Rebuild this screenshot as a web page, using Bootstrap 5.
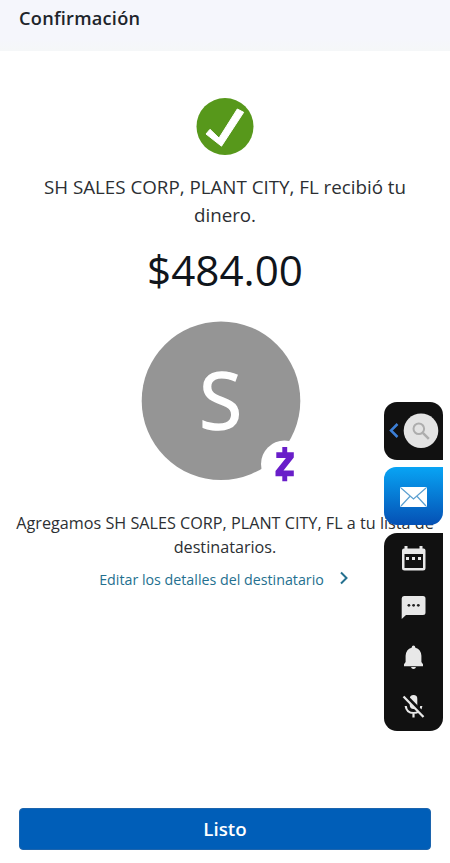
<!DOCTYPE html>
<html lang="es">
<head>
<meta charset="utf-8">
<meta name="viewport" content="width=device-width, initial-scale=1">
<title>Confirmación</title>
<link href="https://cdn.jsdelivr.net/npm/bootstrap@5.3.0/dist/css/bootstrap.min.css" rel="stylesheet">
<style>
  body { font-family: "Open Sans", "Noto Sans", sans-serif; color: #2c2f33; }
  .screen { width: 450px; height: 863px; }
  .top-bar { height: 51px; background: linear-gradient(#f5f6fc 75%, #f5f7f8); padding: 6px 19px; }
  .top-bar h1 { font-size: 18.2px; letter-spacing: .25px; line-height: 25px; font-weight: 600; color: #20242b; }
  .check { margin-top: 46px; height: 60px; }
  .received { margin-top: 16px; font-size: 18.75px; line-height: 28px; }
  .amount { margin-top: 12px; font-size: 42.2px; line-height: 57px; color: #10151b; }
  .avatar { width: 180px; height: 180px; margin: 12px 0 0 130px; }
  .avatar text { font-size: 78px; }
  .added { margin-top: 22px; font-size: 16.2px; line-height: 23.5px; }
  .edit-link { margin: 11px 3px 0 0; font-size: 14.25px; line-height: 20px; color: #24708f; gap: 16px; }
  .edit-link svg { margin-top: -4px; }
  .done { margin: 0 19px 13px; height: 42px; border-radius: 4px; background: #005eb8; border: 1px solid #1c64ad; font-size: 18.7px; font-weight: 600; }
  .edge-tools { left: 384px; top: 402px; width: 59px; gap: 7px; }
  .tool { height: 58px; background: #111; }
  .tool-search { border-radius: 13px 13px 0 13px; }
  .tool-mail { border-radius: 12px 0 13px 13px; background: linear-gradient(#08a4f4, #0550b4); }
  .tool-list { height: 198px; border-radius: 13px 0 13px 13px; margin-top: 1px; }
</style>
</head>
<body class="bg-white">
<div class="screen position-relative d-flex flex-column overflow-hidden">
  <header class="top-bar"><h1 class="m-0">Confirmación</h1></header>

  <main class="flex-grow-1 text-center">
    <svg class="check d-block mx-auto" width="60" height="60" viewBox="0 0 60 60" aria-hidden="true">
      <circle cx="30" cy="29.5" r="28.5" fill="#57981b"/>
      <path d="M11 37 26.500 49.200 48.700 15.300 42.300 12 24 41 15 32.300z" fill="#fff" stroke="#fff" stroke-width="1" stroke-linejoin="round"/>
    </svg>
    <p class="received mb-0">SH SALES CORP, PLANT CITY, FL recibió tu<br>dinero.</p>
    <p class="amount mb-0">$484.00</p>
    <svg class="avatar d-block" viewBox="130 310 180 180" aria-label="S">
      <circle cx="221" cy="400.7" r="79.3" fill="#959595"/>
      <text x="220.700" y="429" fill="#fff" stroke="#fff" stroke-width="1.500" text-anchor="middle">S</text>
      <circle cx="284.5" cy="464" r="23.5" fill="#fff"/>
      <path d="M282.3 447h4.9v5.200h6.600v5.400l-10.300 13h10.300v5.700h-6.600v5h-4.900v-5h-6.800v-5.300l10.400-13.100h-9.600v-5.700h6z" fill="#691ec9"/>
    </svg>
    <p class="added mb-0">Agregamos SH SALES CORP, PLANT CITY, FL a tu lista de<br>destinatarios.</p>
    <a href="#" class="edit-link d-flex justify-content-center align-items-center text-decoration-none">
      <span>Editar los detalles del destinatario</span>
      <svg width="8" height="14" viewBox="0 0 8 14"><path d="M1 1.500 6.500 7 1 12.500" fill="none" stroke="#24708f" stroke-width="2"/></svg>
    </a>
  </main>

  <button type="button" class="done btn btn-primary p-0">Listo</button>

  <aside class="edge-tools position-absolute d-flex flex-column">
    <div class="tool tool-search">
      <svg width="59" height="58" viewBox="0 0 59 58">
        <path d="M13.5 22 7 28.5l6.5 6.5" fill="none" stroke="#3c7fd6" stroke-width="2.5"/>
        <circle cx="37" cy="28.7" r="17.3" fill="#e3e3e3"/>
        <circle cx="34.8" cy="26.8" r="5.3" fill="none" stroke="#adadad" stroke-width="2"/>
        <path d="m38.8 30.8 6 6" stroke="#adadad" stroke-width="2.5"/>
      </svg>
    </div>
    <div class="tool tool-mail">
      <svg width="59" height="58" viewBox="0 0 59 58">
        <rect x="16" y="20" width="27" height="20" rx="1.5" fill="#fff"/>
        <path d="m17 21 12.5 11L42 21M17 39l8.8-9.5M42 39l-8.8-9.5" fill="none" stroke="#5a9fd0" stroke-width="1.2"/>
      </svg>
    </div>
    <div class="tool tool-list">
      <svg width="59" height="198" viewBox="384 533 59 198" fill="#e8e8e8">
        <path fill-rule="evenodd" d="M404.500 546h3v2.500h12V546h3v2.500h1q2 0 2 2V568q0 2.500-2.500 2.500h-18.500q-2.500 0-2.500-2.500v-17.500q0-2 2-2h.5zM404.500 554v14h18.500v-14z"/>
        <path d="M406 557h3v3h-3zm6 0h3v3h-3zm6 0h3v3h-3z"/>
        <path d="M404 596h19q2.500 0 2.500 2.500v14q0 2.500-2.500 2.500h-17l-4.300 4v-20.500q0-2.500 2.300-2.500z"/>
        <g fill="#222"><circle cx="408.900" cy="605.300" r="1.400"/><circle cx="413.600" cy="605.300" r="1.400"/><circle cx="418.300" cy="605.300" r="1.400"/></g>
        <path d="M413.500 645.500q1.600 0 1.900 2.200 5.600 1.600 6 8v6.300l1.600 2.300v1.900h-19v-1.900l1.600-2.300v-6.300q.4-6.400 6-8 .3-2.200 1.900-2.200zM411 667h5q-.5 2-2.500 2t-2.500-2z"/>
        <rect x="409.800" y="695" width="7.500" height="14" rx="3.700"/>
        <path d="M405.700 706q.8 7 7.800 7t7.800-7M413.500 712v5.500" fill="none" stroke="#e8e8e8" stroke-width="2.200"/>
        <path d="m404 694.500 21 21.500" stroke="#111" stroke-width="4"/>
        <path d="m403.500 696.500 20 20.500" stroke="#e8e8e8" stroke-width="2.300"/>
      </svg>
    </div>
  </aside>
</div>
<script src="https://cdn.jsdelivr.net/npm/bootstrap@5.3.0/dist/js/bootstrap.bundle.min.js"></script>
</body>
</html>
